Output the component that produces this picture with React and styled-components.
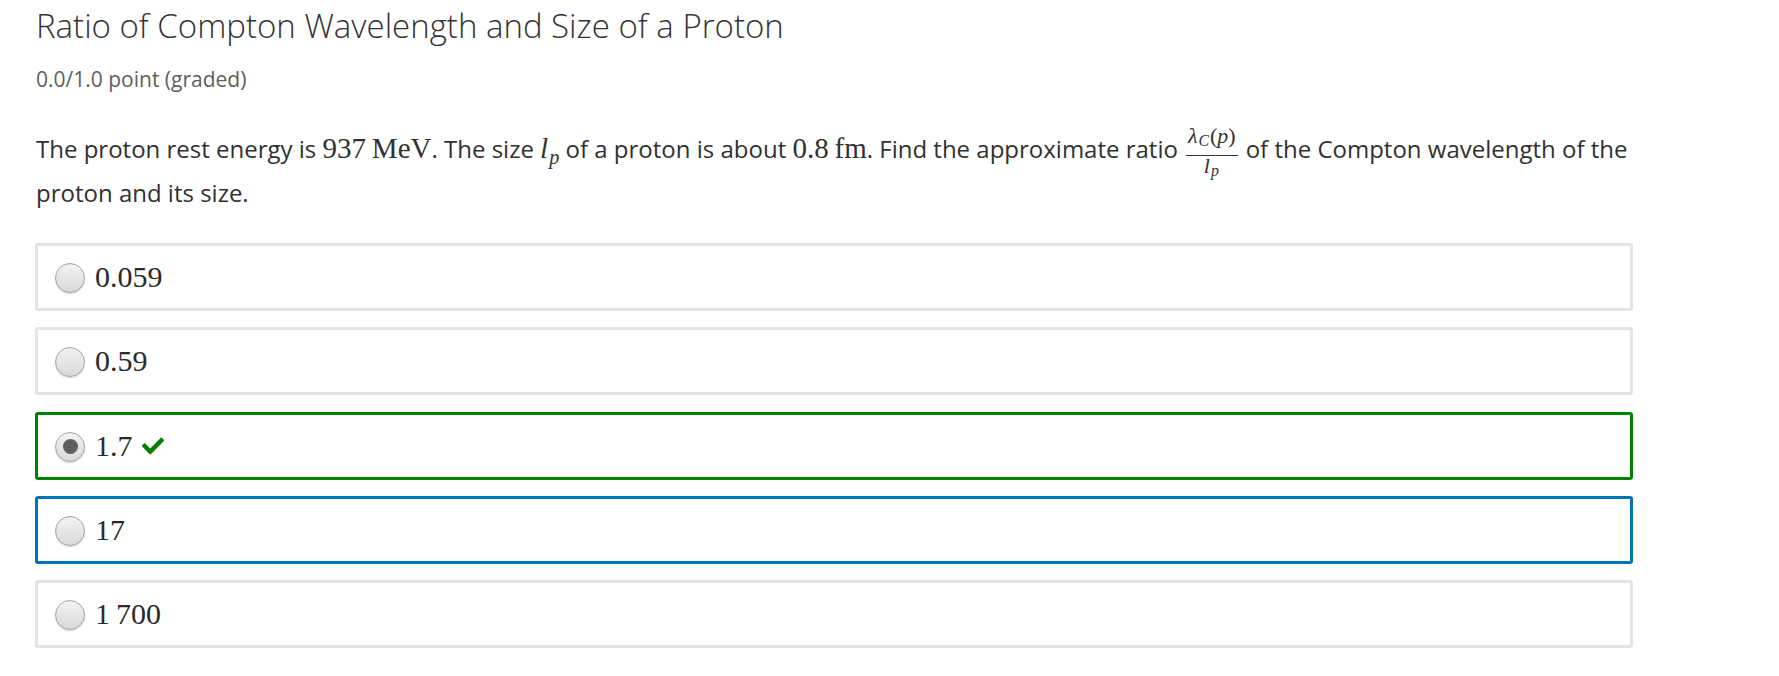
import React from "react";
import styled, { createGlobalStyle } from "styled-components";
import { FaCheck } from "react-icons/fa";

const Global = createGlobalStyle`
  html, body { margin: 0; padding: 0; background: #fff; }
  body { font-family: "Open Sans", "Noto Sans", sans-serif; color: #313131; }
`;

const Page = styled.div`
  padding: 8px 35px 20px 35px;
  width: 1598px;
`;

const Title = styled.h3`
  margin: 0 0 0 1px;
  font-size: 33px;
  line-height: 36px;
  font-weight: 300;
  color: #333;
`;

const Points = styled.div`
  margin: 20px 0 0 1px;
  font-size: 21px;
  line-height: 30px;
  font-weight: 400;
  color: #5e5e5e;
`;

const Prompt = styled.p`
  margin: 33px 0 0 1px;
  font-size: 24px;
  line-height: 44px;
  color: #313131;
`;

const M = styled.span`
  font-family: "Liberation Serif", "Times New Roman", serif;
  font-size: 29px;
  line-height: 1;
  font-style: ${(p) => (p.$italic ? "italic" : "normal")};
  white-space: nowrap;
`;

const Sub = styled.span`
  font-size: 0.7em;
  line-height: 1;
  font-style: italic;
  vertical-align: -0.28em;
  margin-left: 1px;
`;

const Frac = styled.span`
  display: inline-flex;
  flex-direction: column;
  align-items: stretch;
  vertical-align: baseline;
  margin: 0 8px -24px 8px;
  position: relative;
  top: -15px;
  font-family: "Liberation Serif", "Times New Roman", serif;
  font-size: 22px;
  text-align: center;
`;

const Num = styled.span`
  line-height: 22px;
  padding: 0 2px 6px 2px;
  border-bottom: 1.5px solid #313131;
  white-space: nowrap;
`;

const Den = styled.span`
  line-height: 20px;
  white-space: nowrap;
`;

const I = styled.i`
  font-style: italic;
`;

const SmallSub = styled.span`
  font-size: 0.72em;
  font-style: italic;
  vertical-align: -0.2em;
  line-height: 1;
  margin: 0 1px 0 1px;
`;

const Options = styled.div`
  margin-top: 28px;
  display: flex;
  flex-direction: column;
  gap: 16.3px;
`;

const borderColors = {
  correct: "#008100",
  focus: "#0075b4",
  plain: "#e4e4e4",
};

const Choice = styled.label`
  display: flex;
  align-items: center;
  box-sizing: border-box;
  height: 68px;
  padding: 0 17px;
  border: 3px solid ${(p) => borderColors[p.$state]};
  border-radius: 3px;
  background: #fff;
  gap: 10px;
`;

const Radio = styled.span`
  box-sizing: border-box;
  width: 30px;
  height: 30px;
  border-radius: 50%;
  border: 1.5px solid #a2a2a2;
  background: linear-gradient(#f3f3f3, #d9d9d9);
  box-shadow: 0 1.5px 1px rgba(0, 0, 0, 0.12);
  display: flex;
  align-items: center;
  justify-content: center;
  flex-shrink: 0;
  margin-top: 2px;
  &::after {
    content: "";
    display: ${(p) => (p.$checked ? "block" : "none")};
    width: 15px;
    height: 15px;
    border-radius: 50%;
    background: #5f5f5f;
  }
`;

const ChoiceText = styled.span`
  font-family: "Liberation Serif", "Times New Roman", serif;
  font-size: 30px;
  color: #2a2a2a;
  display: flex;
  align-items: center;
  gap: 6px;
`;

const Check = styled(FaCheck)`
  color: #008100;
  width: 28px;
  height: 22px;
`;

const choices = [
  { text: "0.059", state: "plain" },
  { text: "0.59", state: "plain" },
  { text: "1.7", state: "correct", checked: true },
  { text: "17", state: "focus" },
  { text: "1\u2009700", state: "plain" },
];

export default function App() {
  return (
    <>
      <Global />
      <Page>
        <Title>Ratio of Compton Wavelength and Size of a Proton</Title>
        <Points>0.0/1.0 point (graded)</Points>
        <Prompt>
          The proton rest energy is <M>937&thinsp;MeV</M>. The size{" "}
          <M $italic>
            l<Sub>p</Sub>
          </M>{" "}
          of a proton is about <M>0.8&thinsp;fm</M>. Find the approximate ratio
          <Frac>
            <Num>
              <I>λ</I>
              <SmallSub>C</SmallSub>(<I>p</I>)
            </Num>
            <Den>
              <I>l</I>
              <SmallSub>p</SmallSub>
            </Den>
          </Frac>
          of the Compton wavelength of the proton and its size.
        </Prompt>
        <Options>
          {choices.map((c) => (
            <Choice key={c.text} $state={c.state}>
              <Radio $checked={c.checked} />
              <ChoiceText>
                {c.text}
                {c.state === "correct" && <Check />}
              </ChoiceText>
            </Choice>
          ))}
        </Options>
      </Page>
    </>
  );
}
